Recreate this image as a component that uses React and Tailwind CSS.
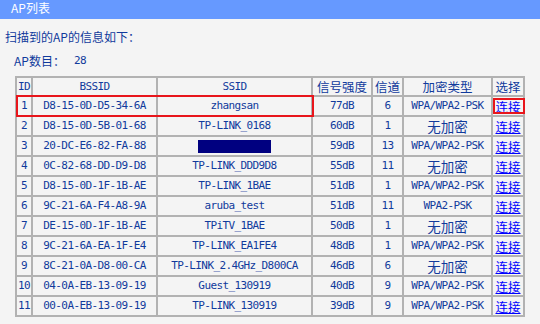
import React from 'react';

const rows = [
  ['1', 'D8-15-0D-D5-34-6A', 'zhangsan', '77dB', '6', 'WPA/WPA2-PSK'],
  ['2', 'D8-15-0D-5B-01-68', 'TP-LINK_0168', '60dB', '1', '无加密'],
  ['3', '20-DC-E6-82-FA-88', null, '59dB', '13', 'WPA/WPA2-PSK'],
  ['4', '0C-82-68-DD-D9-D8', 'TP-LINK_DDD9D8', '55dB', '11', '无加密'],
  ['5', 'D8-15-0D-1F-1B-AE', 'TP-LINK_1BAE', '51dB', '1', 'WPA/WPA2-PSK'],
  ['6', '9C-21-6A-F4-A8-9A', 'aruba_test', '51dB', '11', 'WPA2-PSK'],
  ['7', 'DE-15-0D-1F-1B-AE', 'TPiTV_1BAE', '50dB', '1', '无加密'],
  ['8', '9C-21-6A-EA-1F-E4', 'TP-LINK_EA1FE4', '48dB', '1', 'WPA/WPA2-PSK'],
  ['9', '8C-21-0A-D8-00-CA', 'TP-LINK_2.4GHz_D800CA', '46dB', '6', '无加密'],
  ['10', '04-0A-EB-13-09-19', 'Guest_130919', '40dB', '9', 'WPA/WPA2-PSK'],
  ['11', '00-0A-EB-13-09-19', 'TP-LINK_130919', '39dB', '9', 'WPA/WPA2-PSK'],
];

const mono = "font-['DejaVu_Sans_Mono','Liberation_Mono',monospace] text-[11px] leading-[14px] tracking-[-0.6px]";
const cjk = "font-['Noto_Sans_CJK_SC','Noto_Sans',sans-serif] leading-[15px]";
const cell = 'flex items-center justify-center border-r-2 border-b-2 border-[#b2b2b2] overflow-hidden whitespace-nowrap';

const Cell = ({ children, className = '' }) => (
  <div className={`${cell} ${className}`}>{children}</div>
);

export default function App() {
  return (
    <div className="w-[540px] h-[324px] overflow-hidden bg-[#f4f4f4] text-[#103a9c]">
      <div className="h-[19px] bg-[#6699ff] pl-[11px] pt-[1px] text-white text-[12px] leading-[14px] font-['Noto_Sans_CJK_SC',sans-serif]">
        AP列表
      </div>

      <div className={`${cjk} text-[12px] pl-[5px] mt-[10px]`}>扫描到的AP的信息如下：</div>

      <div className={`${cjk} text-[12px] pl-[14px] mt-[9px] flex items-center`}>
        <span className="w-[60px]">AP数目：</span>
        <span className={mono}>28</span>
      </div>

      <div className="relative ml-[15px] mt-[8px] w-[510px]">
        <div className="grid grid-cols-[16px_125px_155px_60px_31px_89px_32px] border-l-2 border-t-2 border-[#b2b2b2]">
          <Cell className={`h-[19px] ${mono}`}>ID</Cell>
          <Cell className={`h-[19px] ${mono}`}>BSSID</Cell>
          <Cell className={`h-[19px] ${mono}`}>SSID</Cell>
          <Cell className={`h-[19px] ${cjk} text-[12.5px]`}>信号强度</Cell>
          <Cell className={`h-[19px] ${cjk} text-[12.5px]`}>信道</Cell>
          <Cell className={`h-[19px] ${cjk} text-[12.5px]`}>加密类型</Cell>
          <Cell className={`h-[19px] ${cjk} text-[12.5px]`}>选择</Cell>
          {rows.map((r) => (
            <React.Fragment key={r[0]}>
              <Cell className={`h-[20px] ${mono}`}>{r[0]}</Cell>
              <Cell className={`h-[20px] ${mono}`}>{r[1]}</Cell>
              <Cell className={`h-[20px] ${mono}`}>
                {r[2] === null ? <div className="w-[73px] h-[13px] bg-[#000080]" /> : r[2]}
              </Cell>
              <Cell className={`h-[20px] ${mono}`}>{r[3]}</Cell>
              <Cell className={`h-[20px] ${mono}`}>{r[4]}</Cell>
              <Cell className={`h-[20px] ${r[5] === '无加密' ? `${cjk} text-[13.5px]` : mono}`}>{r[5]}</Cell>
              <Cell className={`h-[20px] ${cjk} text-[12.5px]`}>
                <a className="text-[#0000ff] underline">连接</a>
              </Cell>
            </React.Fragment>
          ))}
        </div>
        <div className="absolute left-[1px] top-[19px] w-[298px] h-[22px] border-2 border-[#e8151b]" />
        <div className="absolute left-[478px] top-[22px] w-[32px] h-[16px] border-2 border-[#e8151b]" />
      </div>
    </div>
  );
}
